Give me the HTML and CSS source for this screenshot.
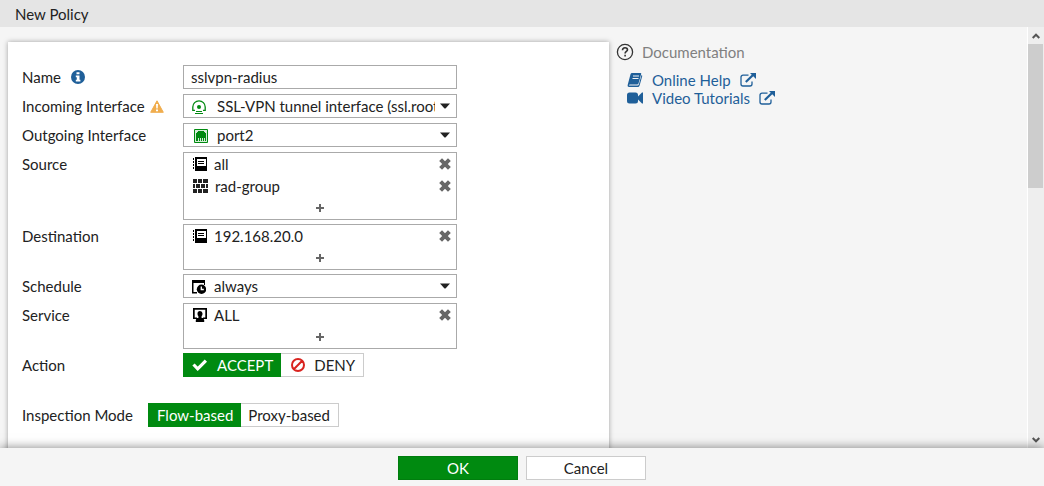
FILE: index.html
```html
<!DOCTYPE html>
<html lang="en">
<head>
    <meta charset="UTF-8">
    <meta name="viewport" content="width=device-width, initial-scale=1.0">
    <title>New Policy</title>
    <link rel="stylesheet" href="styles.css">
</head>
<body>
    <!-- shared icons -->
    <svg class="sprite" aria-hidden="true">
        <symbol id="book" viewBox="0 0 14 14">
            <path fill="#000" d="M2 0h12v14H2z"/>
            <path fill="#fff" d="M4 2h9v7H4z"/>
            <path fill="#000" d="M5 4h6v1H5zM5 6h6v1H5zM0 1h1v2H0zM0 4h1v2H0zM0 7h1v2H0zM0 10h1v2H0z"/>
        </symbol>
        <symbol id="cross" viewBox="0 0 12 12">
            <path stroke="#666" stroke-width="4" d="M1.600 1.600l8.800 8.800M10.400 1.600l-8.800 8.800"/>
        </symbol>
        <symbol id="plus" viewBox="0 0 8 8">
            <path fill="#666" d="M3 0h2v3h3v2H5v3H3V5H0V3h3z"/>
        </symbol>
        <symbol id="caret" viewBox="0 0 10 6">
            <path fill="#222" d="M0 .5h10L5.500 5.500h-1z"/>
        </symbol>
        <symbol id="external" viewBox="0 0 16 14">
            <path fill="none" stroke="#1f5f99" stroke-width="1.300" d="M8.500 2.200H3a2 2 0 0 0-2 2V11a2 2 0 0 0 2 2h7a2 2 0 0 0 2-2V8.500"/>
            <path fill="none" stroke="#1f5f99" stroke-width="2.200" d="M5.800 9L13 2"/>
            <path fill="#1f5f99" d="M10 0h6v6z"/>
        </symbol>
    </svg>

    <header class="title">New Policy</header>

    <div class="main">
        <form class="panel" id="policy">
            <div class="row">
                <label class="label" for="name">Name
                    <svg class="info" width="14" height="14" viewBox="0 0 14 14">
                        <circle cx="7" cy="7" r="7" fill="#1f5f99"/>
                        <path fill="#fff" d="M5.500 2.300h3v2h-3zM4.800 5.500h3.700v4.300h.9v1.700H4.800V9.800h1V7.200h-1z"/>
                    </svg>
                </label>
                <input class="field" id="name" type="text" value="sslvpn-radius">
            </div>
            <div class="row">
                <label class="label" for="incoming">Incoming Interface
                    <svg class="warning" width="14" height="13" viewBox="0 0 14 13">
                        <path fill="#f0ad4e" stroke="#f0ad4e" stroke-linejoin="round" d="M7 .8l6.300 11.500H.7z"/>
                        <path fill="#fff" d="M6 4h2l-.3 4.500H6.300zM6 9.500h2v1.700H6z"/>
                    </svg>
                </label>
                <div class="select">
                    <svg class="icon" width="14" height="14" viewBox="0 0 14 14">
                        <path fill="none" stroke="#008a10" stroke-width="1.300" d="M3 10.300H.8V7a6.200 6.200 0 0 1 12.400 0v3.300H11"/>
                        <circle cx="7" cy="7" r="2" fill="#008a10"/>
                        <path fill="#008a10" d="M4 11h6v1H4zM3 13h8v1H3z"/>
                    </svg>
                    <select class="field wide" id="incoming">
                        <option>SSL-VPN tunnel interface (ssl.root)</option>
                    </select>
                    <svg class="caret" width="10" height="6"><use href="#caret"/></svg>
                </div>
            </div>
            <div class="row">
                <label class="label" for="outgoing">Outgoing Interface</label>
                <div class="select">
                    <svg class="icon port" width="14" height="14" viewBox="0 0 14 14">
                        <path fill="#d5ecd7" stroke="#008a10" d="M.5.500h13v13H.5z"/>
                        <path fill="#008a10" d="M4 2h6v1h1v1h1v8h-1V9h-1v3H9V9H8v3H7V9H6v3H5V9H4v3H2V4h1V3h1z"/>
                    </svg>
                    <select class="field wide" id="outgoing">
                        <option>port2</option>
                    </select>
                    <svg class="caret" width="10" height="6"><use href="#caret"/></svg>
                </div>
            </div>
            <div class="row list-row">
                <span class="label">Source</span>
                <div class="list">
                    <div class="item">
                        <svg width="14" height="14"><use href="#book"/></svg>
                        <span>all</span>
                        <button class="remove" type="button" aria-label="Remove all"><svg width="12" height="12"><use href="#cross"/></svg></button>
                    </div>
                    <div class="item">
                        <svg width="15" height="14" viewBox="0 0 15 14">
                            <path fill="#222" d="M0 0h4v4H0zM5 0h4v4H5zM10 0h5v4h-5zM0 5h2v4H0zM3 5h4v4H3zM8 5h4v4H8zM13 5h2v4h-2zM0 10h4v4H0zM5 10h4v4H5zM10 10h5v4h-5z"/>
                        </svg>
                        <span>rad-group</span>
                        <button class="remove" type="button" aria-label="Remove rad-group"><svg width="12" height="12"><use href="#cross"/></svg></button>
                    </div>
                    <button class="add" type="button" aria-label="Add source"><svg width="8" height="8"><use href="#plus"/></svg></button>
                </div>
            </div>
            <div class="row list-row">
                <span class="label">Destination</span>
                <div class="list">
                    <div class="item">
                        <svg width="14" height="14"><use href="#book"/></svg>
                        <span>192.168.20.0</span>
                        <button class="remove" type="button" aria-label="Remove 192.168.20.0"><svg width="12" height="12"><use href="#cross"/></svg></button>
                    </div>
                    <button class="add" type="button" aria-label="Add destination"><svg width="8" height="8"><use href="#plus"/></svg></button>
                </div>
            </div>
            <div class="row">
                <label class="label" for="schedule">Schedule</label>
                <div class="select">
                    <svg class="icon" width="14" height="14" viewBox="0 0 14 14">
                        <path fill="#000" d="M0 0h13v5h-1V3H1.500v9H5v1.500H0z"/>
                        <circle cx="9.500" cy="9.300" r="4.700" fill="#000"/>
                        <path fill="none" stroke="#fff" stroke-width="1.300" d="M9.300 6.500v3h2.500"/>
                    </svg>
                    <select class="field" id="schedule">
                        <option>always</option>
                    </select>
                    <svg class="caret" width="10" height="6"><use href="#caret"/></svg>
                </div>
            </div>
            <div class="row list-row">
                <span class="label">Service</span>
                <div class="list">
                    <div class="item">
                        <svg width="14" height="14" viewBox="0 0 14 14">
                            <path fill="#000" d="M0 0h14v11h-4V9.500h2.300V1.700H1.700v7.800H4V11H0z"/>
                            <path fill="#000" d="M4.500 5.500a2.500 2.500 0 0 1 5 0c0 1.500-.4 2-.9 2.600V10h1.600l1 2V14H2.800v-2l1-2h1.600V8.100c-.5-.6-.9-1.100-.9-2.600z"/>
                        </svg>
                        <span>ALL</span>
                        <button class="remove" type="button" aria-label="Remove ALL"><svg width="12" height="12"><use href="#cross"/></svg></button>
                    </div>
                    <button class="add" type="button" aria-label="Add service"><svg width="8" height="8"><use href="#plus"/></svg></button>
                </div>
            </div>
            <div class="row">
                <span class="label">Action</span>
                <div class="toggle">
                    <label class="option">
                        <input type="radio" name="action" checked>
                        <svg width="16" height="12" viewBox="0 0 16 12"><path fill="none" stroke="#fff" stroke-width="3.200" d="M1.500 5.500l4.200 4.300 8.200-8.200"/></svg>
                        ACCEPT
                    </label>
                    <label class="option">
                        <input type="radio" name="action">
                        <svg class="deny" width="14" height="14" viewBox="0 0 14 14"><path fill="none" stroke="#d9231f" stroke-width="2" d="M13 7A6 6 0 1 1 1 7a6 6 0 0 1 12 0zM2.800 11.200l8.400-8.400"/></svg>
                        DENY
                    </label>
                </div>
            </div>
            <div class="row mode">
                <span class="label">Inspection Mode</span>
                <div class="toggle">
                    <label class="option"><input type="radio" name="mode" checked>Flow-based</label>
                    <label class="option"><input type="radio" name="mode">Proxy-based</label>
                </div>
            </div>
        </form>

        <aside class="docs">
            <h2 class="docs-title">
                <svg width="18" height="18" viewBox="0 0 18 18">
                    <circle cx="9" cy="9" r="7.600" fill="none" stroke="#333" stroke-width="1.300"/>
                    <path fill="none" stroke="#333" stroke-width="1.600" d="M6.500 7.200c0-3.200 5-3.200 5-.4 0 1.700-2.400 1.700-2.400 3.700M9.100 11.700v1.700"/>
                </svg>
                Documentation
            </h2>
            <a class="link" href="#">
                <svg width="16" height="14" viewBox="0 0 16 14">
                    <path fill="#1f5f99" d="M5 0h8.500q1 0 .7 1L11.500 10.500q-.3 1-1.500 1H3q-1.200 0-1 1h8.500q1 0 1.300-1L14.500 2q1 .3.700 1.300L12.600 12.500q-.4 1.500-2 1.500H2Q.3 14 .6 12.200L3.500 1.300Q3.900 0 5 0z"/>
                    <path stroke="#f5f5f5" fill="none" d="M6 3h6M5.500 5.500h6"/>
                </svg>
                <span>Online Help</span>
                <svg width="16" height="14"><use href="#external"/></svg>
            </a>
            <a class="link" href="#">
                <svg width="16" height="14" viewBox="0 0 16 14">
                    <path fill="#1f5f99" d="M2.500 1.500h6A2.500 2.500 0 0 1 11 4v1.500l4-4h1v11h-1l-4-4V10a2.500 2.500 0 0 1-2.500 2.500h-6A2.500 2.500 0 0 1 0 10V4a2.500 2.500 0 0 1 2.500-2.500z"/>
                </svg>
                <span>Video Tutorials</span>
                <svg width="16" height="14"><use href="#external"/></svg>
            </a>
        </aside>

        <div class="scrollbar">
            <svg width="8" height="6" viewBox="0 0 8 6"><path fill="none" stroke="#555" stroke-width="2" d="M.7 5L4 1.700 7.300 5"/></svg>
            <div class="track"><div class="thumb"></div></div>
            <svg width="8" height="6" viewBox="0 0 8 6"><path fill="none" stroke="#555" stroke-width="2" d="M.7 1L4 4.300 7.300 1"/></svg>
        </div>
    </div>

    <footer class="footer">
        <button class="button ok" type="submit" form="policy">OK</button>
        <button class="button" type="button">Cancel</button>
    </footer>
</body>
</html>
```
FILE: styles.css
```css
* {
    box-sizing: border-box;
}
body {
    display: flex;
    flex-direction: column;
    height: 100vh;
    margin: 0;
    font-family: Lato, "Open Sans", sans-serif;
    font-size: 15px;
    line-height: 22px;
    color: #222;
    background-color: #f5f5f5;
}
svg {
    flex: none;
}
button, input, select {
    font: inherit;
    color: inherit;
}
.sprite {
    position: absolute;
    width: 0;
    height: 0;
}
.title {
    flex: none;
    height: 27px;
    padding: 3px 15px;
    background-color: #e5e5e5;
}
.main {
    display: flex;
    flex: 1;
    min-height: 0;
    overflow: hidden;
}

/* policy form */
.panel {
    flex: 0 1 601px;
    min-height: 500px;
    margin: 15px 0 0 8px;
    padding: 23px 14px;
    background-color: #fff;
    box-shadow: 0 0 5px rgba(0, 0, 0, 0.35);
}
.row {
    display: flex;
    align-items: flex-start;
    margin-bottom: 5px;
}
.list-row {
    margin-bottom: 4px;
}
.label {
    display: flex;
    align-items: center;
    flex: 0 0 161px;
    height: 24px;
}
.info {
    margin-left: 10px;
}
.warning {
    margin-left: 5px;
}
.field {
    width: 100%;
    height: 24px;
    padding: 0 7px;
    border: 1px solid #aaa;
    border-radius: 0;
    background-color: #fff;
}
.row > .field, .select, .list {
    flex: 0 1 274px;
    min-width: 0;
}
.select {
    position: relative;
}
.select .field {
    display: block;
    appearance: none;
    padding: 0 21px 0 30px;
}
.select .wide {
    padding-left: 33px;
}
.icon {
    position: absolute;
    left: 9px;
    top: 6px;
}
.port {
    left: 11px;
}
.caret {
    position: absolute;
    right: 7px;
    top: 9px;
    pointer-events: none;
}
.list {
    border: 1px solid #aaa;
}
.item {
    display: flex;
    align-items: center;
    gap: 7px;
    height: 22px;
    padding: 0 5px 0 9px;
}
.remove, .add {
    display: flex;
    align-items: center;
    justify-content: center;
    padding: 0;
    border: 0;
    background: none;
}
.remove {
    margin-left: auto;
}
.add {
    width: 100%;
    height: 22px;
}

/* segmented buttons */
.toggle {
    display: flex;
}
.option {
    display: flex;
    align-items: center;
    gap: 9px;
    height: 24px;
    padding: 0 8px 0 7px;
    border: 1px solid #ccc;
    border-left: 0;
}
.option input {
    position: absolute;
    opacity: 0;
    pointer-events: none;
}
.option:has(:checked) {
    padding: 0 7px 0 8px;
    color: #fff;
    border: 1px solid #008a10;
    background-color: #008a10;
}
.deny {
    margin-left: 3px;
}
.mode {
    margin-top: 26px;
}
.mode .label {
    flex-basis: 126px;
}

/* help links */
.docs {
    flex: 1;
    padding: 14px 7px;
}
.docs-title {
    display: flex;
    align-items: center;
    gap: 8px;
    margin: 0 0 8px;
    font-size: 15px;
    font-weight: normal;
    color: #808080;
}
.link {
    display: flex;
    align-items: center;
    gap: 9px;
    width: max-content;
    height: 18px;
    margin-left: 11px;
    color: #1f5f99;
    text-decoration: none;
}
.scrollbar {
    display: flex;
    flex-direction: column;
    align-items: center;
    flex: 0 0 17px;
    padding: 6px 0 5px;
    border-left: 1px solid #fff;
    background-color: #eee;
}
.track {
    flex: 1;
    align-self: stretch;
    margin: 5px 1px 5px 0;
}
.thumb {
    height: 37%;
    background-color: #cdcdcd;
}

.footer {
    position: relative;
    display: flex;
    flex: none;
    justify-content: center;
    gap: 8px;
    height: 38px;
    padding-top: 8px;
    background-color: #f5f5f5;
    box-shadow: 0 0 10px rgba(0, 0, 0, 0.5);
}
.button {
    width: 120px;
    height: 24px;
    padding: 0;
    border: 1px solid #ccc;
    background-color: #fff;
}
.ok {
    color: #fff;
    border-color: #007d0e;
    background-color: #008a10;
}
```
